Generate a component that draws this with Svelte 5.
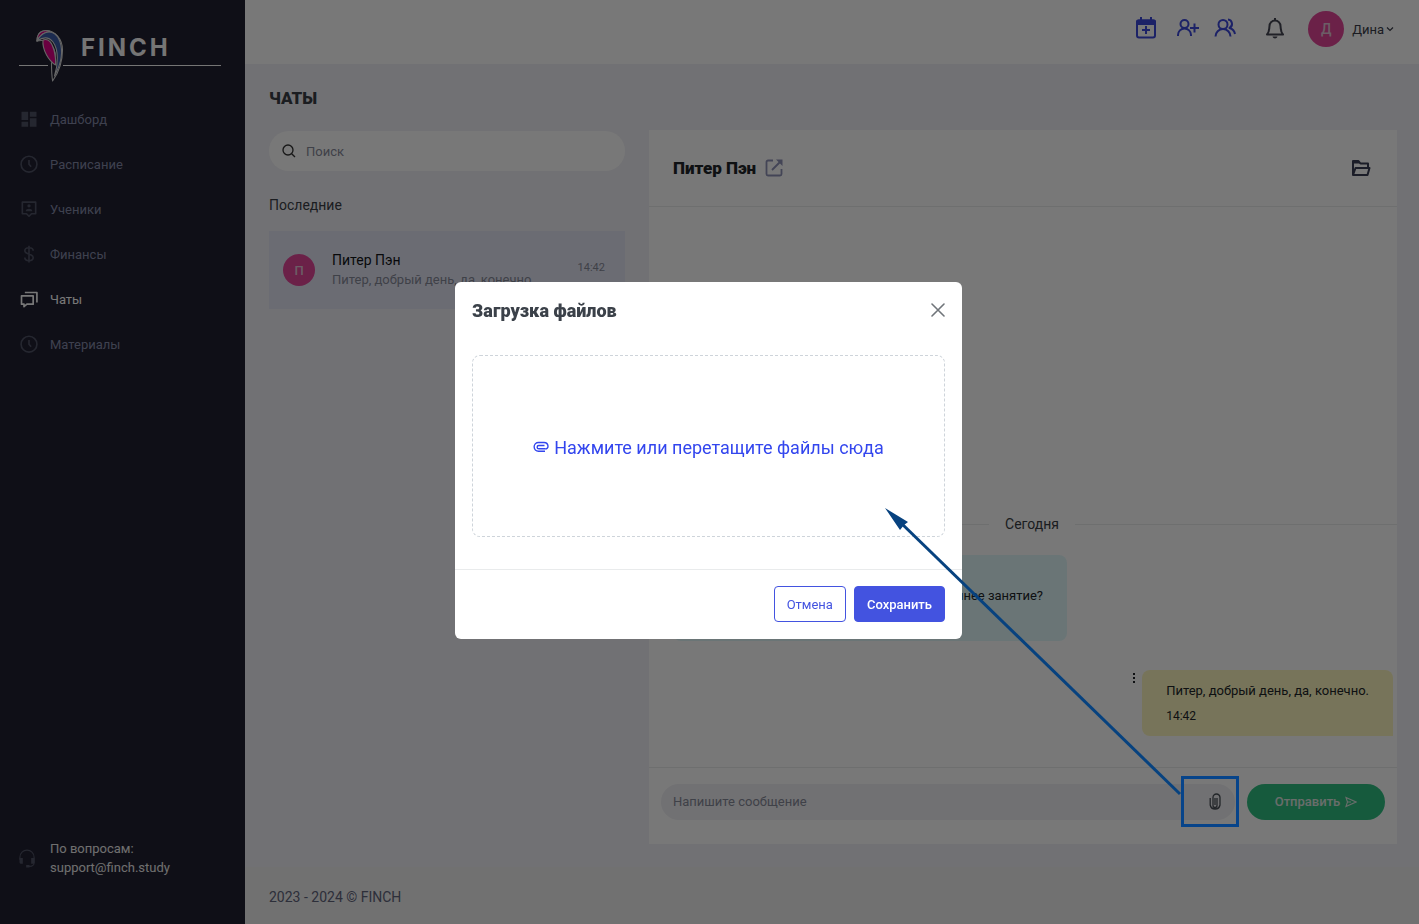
<script>
  const menu = [
    { label: 'Дашборд', icon: 'board' },
    { label: 'Расписание', icon: 'clock' },
    { label: 'Ученики', icon: 'pupil' },
    { label: 'Финансы', icon: 'dollar' },
    { label: 'Чаты', icon: 'chat', active: true },
    { label: 'Материалы', icon: 'clock' }
  ];
  let query = $state('');
  let message = $state('');
</script>

<div class="app">
  <aside>
    <svg class="logo" viewBox="19 26 202 58" role="img" aria-label="FINCH">
      <path d="M19 65.5H48M63 65.5H221" stroke="#f8f8f8" fill="none" />
      <g stroke="#d8d8d8" stroke-width="1.1" stroke-linejoin="round">
        <path d="M37 41C37 35 40 30.500 46 30.500C55 30.500 62.500 39 62.500 50C62.500 63 59 72 52.600 81C51.800 76 51.500 70 51.500 63C60 58 54 37 37 41Z" fill="#202031" />
        <path d="M37 41C37 33 42 29 50 31.500C44 32 40 35 37 41Z" fill="#e00089" />
        <path d="M37 41C41 33 49 29.500 55 34C61 39 63 50 60.500 61C59 68 56 73 54.500 76C58 65 59 50 53 42C49 37 43 37 37 41Z" fill="#3d5da8" />
        <path d="M43 40C49 38 52 43 54 50C55.500 56 56 60 55.500 65C49 61 42 50 43 40Z" fill="#e00089" />
      </g>
      <text x="81" y="56" fill="#f8f8f8" font-size="24" font-weight="700" letter-spacing="3">FINCH</text>
    </svg>
    <nav>
      {#each menu as item}
        <a href="#top" class:active={item.active}>
          <svg viewBox="0 1 24 24" width="20" height="20" aria-hidden="true">
            {#if item.icon === 'board'}
              <path fill="currentColor" d="M13 3v6h8V3zM13 21h8V11h-8zM3 21h8v-6H3zM3 13h8V3H3z" />
            {:else if item.icon === 'clock'}
              <path class="line" d="M12 2.500a9.500 9.500 0 1 0 0 19a9.500 9.500 0 0 0 0-19zM12 7v5l2.500 3" />
            {:else if item.icon === 'pupil'}
              <path class="line" d="M4 3.500h16v14h-5l-3 3l-3-3H4z" />
              <path fill="currentColor" d="M12 6a2 2 0 1 1 0 4a2 2 0 0 1 0-4zM8 14.500c0-4 8-4 8 0z" />
            {:else if item.icon === 'dollar'}
              <path class="line" d="M12 2v20M17 8c0-5-10-5-10 0s10 3 10 8s-10 5-10 0" />
            {:else}
              <path class="line" d="M3 8h14v10H9.500L6 21v-3H3zM7 4h14.500v12" />
            {/if}
          </svg>
          {item.label}
        </a>
      {/each}
    </nav>
    <div class="support">
      <svg viewBox="0 0 24 24" width="20" height="20" aria-hidden="true">
        <path class="line thin" d="M3.500 14v-3a8.500 8.500 0 0 1 17 0v7c0 2-2 4-5 4h-3" />
        <path fill="currentColor" d="M3 12h4v7H5c-1 0-2-1-2-2zM17 12h4v5c0 1-1 2-2 2h-2zM11 20.500h4v3h-4z" />
      </svg>
      <div>По вопросам:<br /><a href="mailto:support@finch.study">support@finch.study</a></div>
    </div>
  </aside>

  <div class="page">
    <header>
      <button class="blue" aria-label="Добавить занятие">
        <svg viewBox="0 1 24 24" width="24" height="24"><path class="line" d="M5 4.500h14a2 2 0 0 1 2 2v13a2 2 0 0 1-2 2H5a2 2 0 0 1-2-2v-13a2 2 0 0 1 2-2zM12 10v8M8 14h8" /><path fill="currentColor" d="M4 3.500h16a2 2 0 0 1 2 2V9H2V5.500a2 2 0 0 1 2-2zM6 1h2v4H6zM16 1h2v4h-2z" /></svg>
      </button>
      <button class="blue" aria-label="Добавить ученика">
        <svg viewBox="0 1 24 24" width="24" height="24"><path class="line" d="M8.500 4a4 4 0 1 1 0 8a4 4 0 0 1 0-8zM2 20v-1a6.500 6.500 0 0 1 13 0v1M18.500 7.500v9M14 12h9" /></svg>
      </button>
      <button class="blue" aria-label="Ученики">
        <svg viewBox="0 1 24 24" width="24" height="24"><path class="line" d="M10 4a4.500 4.500 0 1 1 0 9a4.500 4.500 0 0 1 0-9zM2.500 20.500a7.500 7.500 0 0 1 15 0M15 3.500a4.500 4.500 0 0 1 1.500 8.500c3 1 5 3 5.500 6" /></svg>
      </button>
      <button class="bell" aria-label="Уведомления">
        <svg viewBox="0 1 24 24" width="24" height="24"><path class="line bold" d="M12 2v2M4 18.500C6.500 16 6 14 6.500 10a5.500 5.500 0 0 1 11 0c.5 4 0 6 2.500 8.500z" /><path fill="currentColor" d="M9.500 20.500h5c-.5 2.500-4.500 2.500-5 0z" /></svg>
      </button>
      <button class="user">
        <span class="avatar big">Д</span>Дина
        <svg viewBox="0 0 8 8" width="8" height="8" aria-hidden="true"><path d="M1 2.500l3 3l3-3" fill="none" stroke="currentColor" stroke-width="1.2" /></svg>
      </button>
    </header>

    <main>
      <h1>ЧАТЫ</h1>
      <div class="columns">
        <section class="list">
          <label class="search">
            <svg viewBox="0 0 24 24" width="16" height="16" aria-hidden="true"><path class="line" d="M10.500 3a7.500 7.500 0 1 1 0 15a7.500 7.500 0 0 1 0-15zM16 16l5 5" /></svg>
            <input type="text" placeholder="Поиск" aria-label="Поиск" bind:value={query} />
          </label>
          <h2>Последние</h2>
          <a class="dialog" href="#top">
            <span class="avatar">П</span>
            <span class="who"><b>Питер Пэн</b><span>Питер, добрый день, да, конечно</span></span>
            <time>14:42</time>
          </a>
        </section>

        <section class="card">
          <div class="card-head">
            <h3>Питер Пэн</h3>
            <a href="#top" aria-label="Открыть профиль"><svg viewBox="0 0 20 20" width="20" height="20"><path d="M9 2.500H4A1.500 1.500 0 0 0 2.500 4v12A1.500 1.500 0 0 0 4 17.500h12a1.500 1.500 0 0 0 1.500-1.500V11M8 12l8-8" fill="none" stroke="currentColor" stroke-width="1.8" /><path d="M12 1.500h6.500V8z" fill="currentColor" /></svg></a>
            <button aria-label="Файлы"><svg viewBox="0 0 20 20" width="20" height="20"><path d="M2 17V3h5.500l2 2.500H17V9.500M2 17L4.500 10h14L16.500 17z" fill="none" stroke="currentColor" stroke-width="2" stroke-linejoin="round" /><path d="M2 3h5.500l2 2.500H2z" fill="currentColor" /></svg></button>
          </div>
          <div class="feed">
            <div class="day"><span>Сегодня</span></div>
            <div class="bubble theirs">Раннее занятие?</div>
            <div class="mine-row">
              <button aria-label="Действия"><svg viewBox="0 0 4 12" width="4" height="12"><path fill="currentColor" d="M1 1h2v2H1zM1 5h2v2H1zM1 9h2v2H1z" /></svg></button>
              <div class="bubble mine">Питер, добрый день, да, конечно.<time>14:42</time></div>
            </div>
          </div>
          <div class="composer">
            <div class="field">
              <input type="text" placeholder="Напишите сообщение" aria-label="Сообщение" bind:value={message} />
              <button aria-label="Прикрепить файл"><svg viewBox="0 0 12 18" width="12" height="18"><path d="M8 5v7.500a2 2 0 0 1-4 0V4.500a3.300 3.300 0 0 1 7 0v7.500a5 5 0 0 1-9.800 0V5M6 5v7" fill="none" stroke="currentColor" stroke-width="1.3" /></svg></button>
            </div>
            <button class="send">Отправить<svg viewBox="0 0 12 12" width="12" height="12" aria-hidden="true"><path d="M1 1.500l10 4.500l-10 4.500l1.500-4.500zM2.500 6H6" fill="none" stroke="currentColor" stroke-width="1.1" /></svg></button>
          </div>
        </section>
      </div>
    </main>
    <footer>2023 - 2024 © FINCH</footer>
  </div>
</div>

<div class="backdrop">
  <div class="modal" role="dialog" aria-modal="true" aria-labelledby="upload-title">
    <div class="modal-head">
      <h4 id="upload-title">Загрузка файлов</h4>
      <button aria-label="Закрыть"><svg viewBox="0 0 14 14" width="14" height="14"><path d="M1 1l12 12M13 1L1 13" fill="none" stroke="#70757a" stroke-width="1.6" stroke-linecap="round" /></svg></button>
    </div>
    <div class="modal-body">
      <button class="drop">
        <svg viewBox="0 0 16 12" width="16" height="12" aria-hidden="true"><path d="M12 7.800H5.800a1.500 1.500 0 0 1 0-3.300H11.500M12 7.800a2.500 2.500 0 0 0 3-2.800a4 4 0 0 0-4-3.500H5.500a4.300 4.300 0 0 0 0 8.700H12" fill="none" stroke="currentColor" stroke-width="1.4" /></svg>
        Нажмите или перетащите файлы сюда
      </button>
    </div>
    <div class="modal-foot">
      <button class="cancel">Отмена</button>
      <button class="save">Сохранить</button>
    </div>
  </div>
</div>

<svg class="notes" width="1419" height="924" aria-hidden="true">
  <path d="M1180 794L900 522" stroke="#07427f" stroke-width="3" fill="none" />
  <path d="M885 508L908 522L904 525L900 530Z" fill="#07427f" />
  <rect x="1182.500" y="777.500" width="55" height="48" fill="none" stroke="#07448a" stroke-width="3" />
</svg>

<style>
  :global(body) { margin: 0; font-family: Roboto, sans-serif; font-size: 13px; }
  :global(*) { box-sizing: border-box; }
  a { color: inherit; text-decoration: none; }
  button { border: 0; padding: 0; background: none; font: inherit; color: inherit; display: flex; align-items: center; justify-content: center; cursor: pointer; }
  input { border: 0; outline: 0; padding: 0; background: none; font: inherit; color: #495057; flex: 1; min-width: 0; }
  h1, h2, h3, h4 { margin: 0; }
  svg { display: block; flex: none; }
  .line { fill: none; stroke: currentColor; stroke-width: 2; stroke-linejoin: round; }
  .thin { stroke-width: 1.4; }

  .app { display: flex; min-height: 100vh; color: #495057; }
  aside { width: 245px; flex: none; display: flex; flex-direction: column; background: #202031; color: #858aa8; }
  .logo { width: 202px; height: 58px; margin: 26px 0 0 19px; font-family: Inter, sans-serif; }
  nav { margin-top: 13px; }
  nav a { display: flex; align-items: center; gap: 11px; height: 45px; padding-left: 19px; }
  nav svg, .support svg { color: #505366; }
  nav a.active, nav a.active svg { color: #fff; }
  .support { display: flex; align-items: center; gap: 13px; margin-top: auto; padding: 0 0 47px 17px; line-height: 19px; color: #ececec; }

  .page { flex: 1; min-width: 0; display: flex; flex-direction: column; background: #f1f1f6; }
  header { height: 64px; display: flex; align-items: center; justify-content: flex-end; padding: 0 25px 6px; background: #fff; }
  .blue { color: #3d49dc; margin-right: 13px; }
  .blue:first-child { margin-right: 18px; }
  .bell { color: #444653; margin: 0 21px 0 13px; }
  .user { color: #3b3d4a; }
  .user svg { margin-left: 2px; }
  .avatar { width: 32px; height: 32px; flex: none; border-radius: 50%; display: flex; align-items: center; justify-content: center; background: #e4469a; color: #e5c6d8; font-weight: 500; }
  .big { width: 36px; height: 36px; margin-right: 8px; font-size: 14px; }

  main { flex: 1; display: flex; flex-direction: column; padding: 24px 22px 23px 24px; }
  h1 { font-size: 17px; line-height: 20px; font-weight: 900; color: #3b3f46; }
  .columns { flex: 1; display: grid; grid-template-columns: 356fr 748fr; gap: 24px; margin-top: 22px; }
  .search { display: flex; align-items: center; gap: 9px; height: 40px; margin-top: 1px; padding: 0 12px; border-radius: 20px; background: #fff; color: #333; }
  ::placeholder { color: #878a99; opacity: 1; }
  h2 { margin-top: 25px; font-size: 14px; line-height: 18px; font-weight: 400; color: #3b3f46; }
  .dialog { display: flex; align-items: center; height: 78px; margin-top: 17px; padding: 0 20px 0 14px; background: #e4e6f5; }
  .who { flex: 1; display: flex; flex-direction: column; margin-left: 17px; line-height: 20px; color: #878a99; }
  .who b { font-size: 14px; font-weight: 400; color: #111519; }
  .dialog time { font-size: 11px; margin-bottom: 6px; color: #878a99; }

  .card { display: flex; flex-direction: column; background: #fff; }
  .card-head { display: flex; align-items: center; height: 77px; padding: 0 26px 0 24px; border-bottom: 1px solid #e9ebec; }
  .card-head h3 { font-size: 17px; font-weight: 900; color: #212529; }
  .card-head a { margin-left: 8px; color: #8f92b8; }
  .card-head button { margin-left: auto; color: #3b3f55; }
  .feed { flex: 1; display: flex; flex-direction: column; justify-content: flex-end; padding: 0 4px 31px 24px; color: #212529; }
  .day { display: flex; align-items: center; gap: 16px; margin: 0 -4px 22px -6px; font-size: 14px; line-height: 18px; color: #3b3f46; }
  .day::before, .day::after { content: ''; flex: 1; height: 1px; background: #e9ebec; }
  .bubble { border-radius: 8px; padding: 0 24px; }
  .theirs { align-self: flex-start; width: 394px; height: 86px; line-height: 82px; text-align: right; background: #e2f9fb; }
  .mine-row { display: flex; justify-content: flex-end; align-items: flex-start; gap: 6px; margin-top: 29px; }
  .mine-row button { margin-top: 2px; }
  .mine { display: flex; flex-direction: column; gap: 5px; padding: 11px 24px 10px; line-height: 20px; background: #fdf7bf; border-bottom-right-radius: 0; }
  .mine time { font-size: 12px; }
  .composer { display: flex; gap: 12px; padding: 16px 12px 24px; border-top: 1px solid #e9ebec; }
  .field { flex: 1; display: flex; height: 36px; padding: 0 14px 0 12px; border-radius: 18px; background: #f0f0f4; }
  .field input { padding-bottom: 2px; }
  .send { width: 138px; height: 36px; gap: 5px; padding-bottom: 1px; border-radius: 18px; background: #2fc082; color: #e0e8e4; font-weight: 500; }
  footer { height: 57px; padding: 0 24px; line-height: 60px; font-size: 14px; background: #f0f0f0; color: #61647c; }

  .backdrop { position: fixed; inset: 0; display: grid; place-items: center; padding: 0 2px 3px 0; background: rgba(0, 0, 0, 0.53); }
  .modal { width: 507px; border-radius: 6px; background: #fff; overflow: hidden; }
  .modal-head { display: flex; align-items: center; justify-content: space-between; height: 56px; padding: 0 17px; }
  h4 { font-size: 18px; font-weight: 900; color: #3b4149; }
  .modal-body { padding: 17px 17px 32px; }
  .drop { width: 100%; height: 182px; gap: 5px; padding-top: 2px; border: 1px dashed #ced4da; border-radius: 8px; color: #3346ee; font-size: 18px; }
  .modal-foot { display: flex; justify-content: flex-end; gap: 8px; padding: 16px 17px 17px; border-top: 1px solid #e9ebec; }
  .modal-foot button { height: 36px; padding: 0 12px; border: 1px solid #4353e0; border-radius: 4px; color: #4353e0; }
  .modal-foot .save { background: #4353e0; color: #fff; font-weight: 500; }
  .notes { position: absolute; top: 0; left: 0; pointer-events: none; }
</style>
